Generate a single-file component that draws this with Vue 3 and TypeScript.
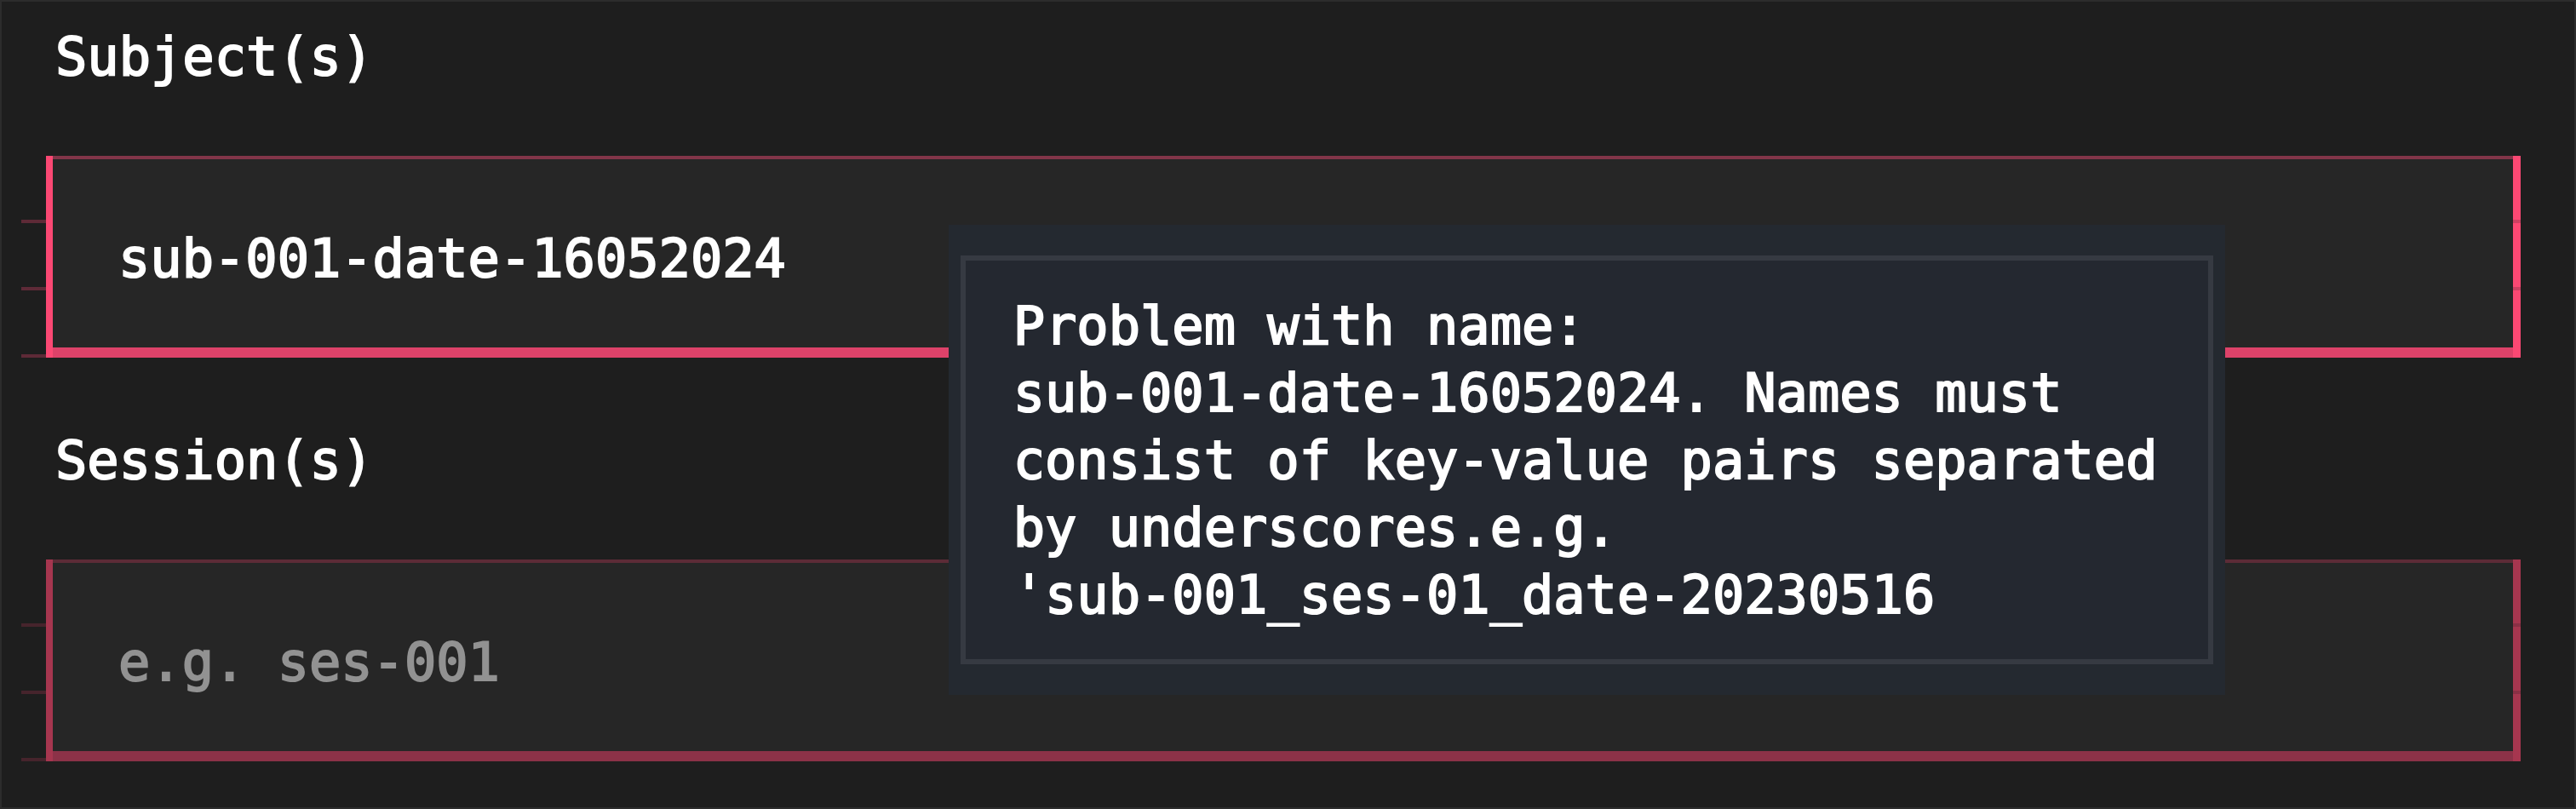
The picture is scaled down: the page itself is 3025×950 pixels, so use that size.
<script setup lang="ts">
import { reactive } from 'vue'

interface Field {
  id: string
  label: string
  value: string
  placeholder: string
  invalid: boolean
}

const fields = reactive<Field[]>([
  { id: 'subjects', label: 'Subject(s)', value: 'sub-001-date-16052024', placeholder: 'e.g. sub-001', invalid: true },
  { id: 'sessions', label: 'Session(s)', value: '', placeholder: 'e.g. ses-001', invalid: false },
])

const problem = [
  'Problem with name:',
  'sub-001-date-16052024. Names must',
  'consist of key-value pairs separated',
  'by underscores.e.g.',
  "'sub-001_ses-01_date-20230516",
].join('\n')
</script>

<template>
  <main class="screen">
    <form class="form" @submit.prevent>
      <div v-for="field in fields" :key="field.id" class="field">
        <label class="label" :for="field.id">{{ field.label }}</label>
        <div class="frame" :class="{ active: field.invalid }">
          <input
            :id="field.id"
            v-model="field.value"
            class="input"
            type="text"
            autocomplete="off"
            spellcheck="false"
            :placeholder="field.placeholder"
            :aria-invalid="field.invalid"
            :aria-describedby="field.invalid ? 'name-problem' : undefined"
          />
        </div>
      </div>
    </form>
    <div id="name-problem" class="tooltip" role="tooltip">
      <p class="message">{{ problem }}</p>
    </div>
  </main>
</template>

<style>
body {
  margin: 0;
  background: #1e1e1e;
}
</style>

<style scoped>
.screen {
  position: relative;
  box-sizing: border-box;
  min-height: 100vh;
  padding: 25px 63px 50px 52px;
  border: 2px solid #2c2c2c;
  background: #1e1e1e;
  color: #ffffff;
  font-family: "DejaVu Sans Mono", "Liberation Mono", monospace;
  font-size: 62px;
  line-height: 79px;
  -webkit-text-stroke: 2px currentColor;
}

.form {
  display: flex;
  flex-direction: column;
  gap: 81px;
}

.field {
  display: flex;
  flex-direction: column;
  gap: 77px;
}

.label {
  padding-left: 11px;
}

.frame {
  --side: #a6364f;
  --top: #5c2b37;
  --bottom: #8c3248;
  --tick: #46242c;
  --notch: #8a3045;
  position: relative;
  border: solid var(--side);
  border-width: 0 9px 0 8px;
}

.frame.active {
  --side: #fb4873;
  --top: #823549;
  --bottom: #dd4269;
  --tick: #5e2a37;
  --notch: #cc4062;
}

.frame::before,
.frame::after {
  content: "";
  position: absolute;
  top: 0;
}

.frame::before {
  left: -37px;
  width: 29px;
  height: 237px;
  background: repeating-linear-gradient(transparent 0 75px, var(--tick) 75px 79px);
}

.frame::after {
  right: -9px;
  width: 9px;
  height: 158px;
  background: repeating-linear-gradient(transparent 0 75px, var(--notch) 75px 79px);
}

.input {
  display: block;
  box-sizing: border-box;
  width: 100%;
  height: 237px;
  margin: 0;
  padding: 12px 77px 0;
  border: solid;
  border-width: 4px 0 12px;
  border-color: var(--top) transparent var(--bottom);
  border-radius: 0;
  outline: none;
  background: #262626;
  color: #ffffff;
  font: inherit;
  -webkit-text-stroke: inherit;
}

.input::placeholder {
  color: #929292;
  opacity: 1;
}

.tooltip {
  position: absolute;
  top: 262px;
  left: 36.8%;
  padding: 36px 14px;
  background: #242930;
}

.message {
  margin: 0;
  padding: 37px 59px 36px 56px;
  border: 6px solid #363a42;
  background: #242830;
  white-space: pre;
}
</style>
